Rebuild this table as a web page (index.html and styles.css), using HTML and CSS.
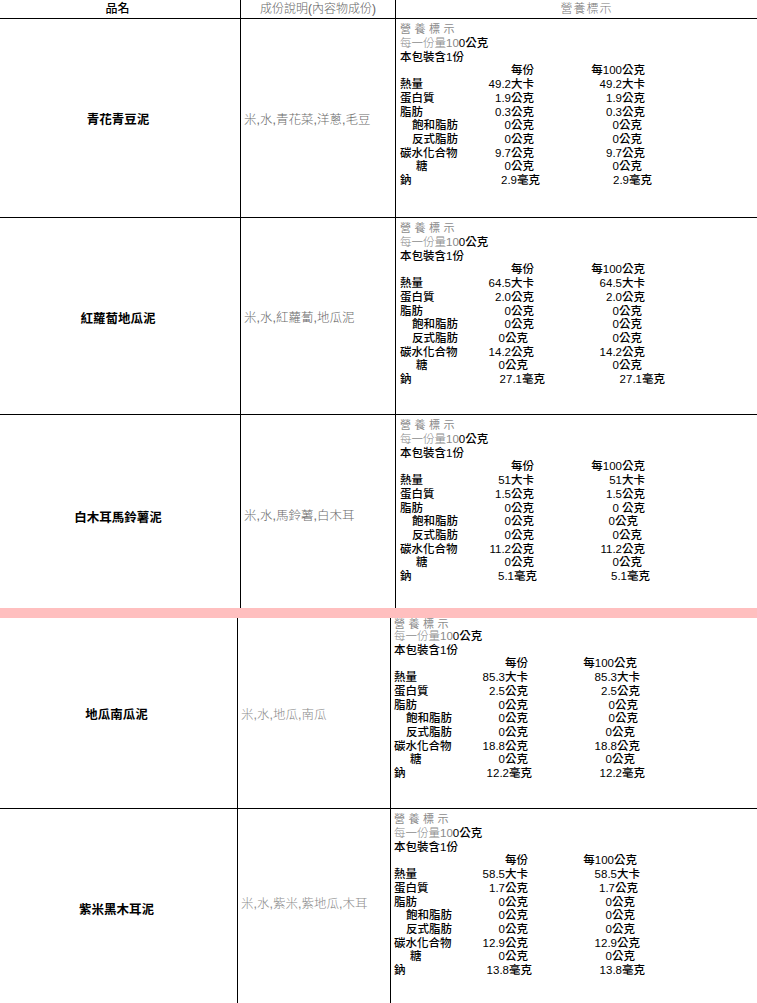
FILE: index.html
```html
<!DOCTYPE html>
<html lang="zh-Hant">
<head>
<meta charset="utf-8">
<title>營養標示</title>
<link rel="stylesheet" href="styles.css">
</head>
<body>
<section class="sheet sheet-top">
  <div class="row head">
    <div class="cell c-name">品名</div>
    <div class="cell c-ing">成份說明(內容物成份)</div>
    <div class="cell c-nut">營養標示</div>
  </div>

  <div class="row r1">
    <div class="cell c-name">青花青豆泥</div>
    <div class="cell c-ing">米,水,青花菜,洋蔥,毛豆</div>
    <div class="cell c-nut">
      <div class="nut">
        <div class="n-title">營養標示</div>
        <div class="n-line"><span class="g">每一份量10</span>0公克</div>
        <div class="n-line">本包裝含1份</div>
        <span></span><span class="v">每份</span><span class="v">每100公克</span>
        <span>熱量</span><span class="v">49.2大卡</span><span class="v">49.2大卡</span>
        <span>蛋白質</span><span class="v">1.9公克</span><span class="v">1.9公克</span>
        <span>脂肪</span><span class="v">0.3公克</span><span class="v">0.3公克</span>
        <span class="ind">飽和脂肪</span><span class="v">0公克</span><span class="v sh-3">0公克</span>
        <span class="ind">反式脂肪</span><span class="v">0公克</span><span class="v sh-3">0公克</span>
        <span>碳水化合物</span><span class="v">9.7公克</span><span class="v">9.7公克</span>
        <span class="ind2">糖</span><span class="v">0公克</span><span class="v sh-3">0公克</span>
        <span>鈉</span><span class="v sh6">2.9毫克</span><span class="v sh7">2.9毫克</span>
      </div>
    </div>
  </div>

  <div class="row r2">
    <div class="cell c-name">紅蘿蔔地瓜泥</div>
    <div class="cell c-ing">米,水,紅蘿蔔,地瓜泥</div>
    <div class="cell c-nut">
      <div class="nut">
        <div class="n-title">營養標示</div>
        <div class="n-line"><span class="g">每一份量10</span>0公克</div>
        <div class="n-line">本包裝含1份</div>
        <span></span><span class="v">每份</span><span class="v">每100公克</span>
        <span>熱量</span><span class="v">64.5大卡</span><span class="v">64.5大卡</span>
        <span>蛋白質</span><span class="v">2.0公克</span><span class="v">2.0公克</span>
        <span>脂肪</span><span class="v">0公克</span><span class="v sh-3">0公克</span>
        <span class="ind">飽和脂肪</span><span class="v">0公克</span><span class="v sh-3">0公克</span>
        <span class="ind">反式脂肪</span><span class="v sh-6">0公克</span><span class="v sh-3">0公克</span>
        <span>碳水化合物</span><span class="v">14.2公克</span><span class="v">14.2公克</span>
        <span class="ind2">糖</span><span class="v sh-6">0公克</span><span class="v sh-3">0公克</span>
        <span>鈉</span><span class="v sh11">27.1毫克</span><span class="v sh20">27.1毫克</span>
      </div>
    </div>
  </div>

  <div class="row r3">
    <div class="cell c-name">白木耳馬鈴薯泥</div>
    <div class="cell c-ing">米,水,馬鈴薯,白木耳</div>
    <div class="cell c-nut">
      <div class="nut">
        <div class="n-title">營養標示</div>
        <div class="n-line"><span class="g">每一份量10</span>0公克</div>
        <div class="n-line">本包裝含1份</div>
        <span></span><span class="v">每份</span><span class="v">每100公克</span>
        <span>熱量</span><span class="v">51大卡</span><span class="v">51大卡</span>
        <span>蛋白質</span><span class="v">1.5公克</span><span class="v">1.5公克</span>
        <span>脂肪</span><span class="v">0公克</span><span class="v">0 公克</span>
        <span class="ind">飽和脂肪</span><span class="v">0公克</span><span class="v sh-7">0公克</span>
        <span class="ind">反式脂肪</span><span class="v">0公克</span><span class="v sh-3">0公克</span>
        <span>碳水化合物</span><span class="v">11.2公克</span><span class="v">11.2公克</span>
        <span class="ind2">糖</span><span class="v">0公克</span><span class="v sh-3">0公克</span>
        <span>鈉</span><span class="v sh3">5.1毫克</span><span class="v sh5">5.1毫克</span>
      </div>
    </div>
  </div>
</section>

<div class="band"></div>

<section class="sheet sheet-bottom">
  <div class="row r4">
    <div class="cell c-name">地瓜南瓜泥</div>
    <div class="cell c-ing">米,水,地瓜,南瓜</div>
    <div class="cell c-nut">
      <div class="nut cut">
        <div class="n-title">營養標示</div>
        <div class="n-line"><span class="g">每一份量10</span>0公克</div>
        <div class="n-line">本包裝含1份</div>
        <span></span><span class="v">每份</span><span class="v sh-3">每100公克</span>
        <span>熱量</span><span class="v">85.3大卡</span><span class="v">85.3大卡</span>
        <span>蛋白質</span><span class="v">2.5公克</span><span class="v">2.5公克</span>
        <span>脂肪</span><span class="v">0公克</span><span class="v sh-2">0公克</span>
        <span class="ind">飽和脂肪</span><span class="v">0公克</span><span class="v sh-2">0公克</span>
        <span class="ind">反式脂肪</span><span class="v">0公克</span><span class="v sh-5">0公克</span>
        <span>碳水化合物</span><span class="v">18.8公克</span><span class="v">18.8公克</span>
        <span class="ind2">糖</span><span class="v">0公克</span><span class="v sh-5">0公克</span>
        <span>鈉</span><span class="v sh4">12.2毫克</span><span class="v sh5">12.2毫克</span>
      </div>
    </div>
  </div>

  <div class="row r5">
    <div class="cell c-name">紫米黑木耳泥</div>
    <div class="cell c-ing">米,水,紫米,紫地瓜,木耳</div>
    <div class="cell c-nut">
      <div class="nut">
        <div class="n-title">營養標示</div>
        <div class="n-line"><span class="g">每一份量10</span>0公克</div>
        <div class="n-line">本包裝含1份</div>
        <span></span><span class="v">每份</span><span class="v sh-3">每100公克</span>
        <span>熱量</span><span class="v">58.5大卡</span><span class="v">58.5大卡</span>
        <span>蛋白質</span><span class="v">1.7公克</span><span class="v sh-2">1.7公克</span>
        <span>脂肪</span><span class="v">0公克</span><span class="v sh-5">0公克</span>
        <span class="ind">飽和脂肪</span><span class="v">0公克</span><span class="v sh-5">0公克</span>
        <span class="ind">反式脂肪</span><span class="v">0公克</span><span class="v sh-5">0公克</span>
        <span>碳水化合物</span><span class="v">12.9公克</span><span class="v">12.9公克</span>
        <span class="ind2">糖</span><span class="v">0公克</span><span class="v sh-5">0公克</span>
        <span>鈉</span><span class="v sh4">13.8毫克</span><span class="v sh5">13.8毫克</span>
      </div>
    </div>
  </div>
</section>
</body>
</html>
```

FILE: styles.css
```css
* { box-sizing: border-box; }

html, body {
  margin: 0;
  padding: 0;
  background: #fff;
}

body {
  width: 757px;
  height: 1003px;
  overflow: hidden;
  font-family: "Liberation Sans", "Noto Sans CJK TC", sans-serif;
  color: #000;
}

.sheet { overflow: hidden; }
.sheet-top { height: 608px; }
.sheet-bottom { height: 385px; }

.band {
  height: 10px;
  background: #ffbfbf;
}

.row {
  display: grid;
  grid-template-columns: 241px 155px 1fr;
  border-bottom: 1px solid #000;
}

.sheet-bottom .row {
  grid-template-columns: 238px 153px 1fr;
}

.c-name,
.c-ing {
  border-right: 1px solid #000;
}

/* header row */
.head { height: 19px; }

.head .cell {
  display: flex;
  align-items: center;
  justify-content: center;
  font-size: 12px;
  line-height: 18px;
}

.head .c-name { padding-right: 5px; font-weight: 500; }
.head .c-ing { color: #666; font-weight: 300; }
.head .c-nut { color: #777; font-weight: 300; letter-spacing: 1px; padding-left: 20px; }

/* row heights */
.r1 { height: 199px; }
.r2 { height: 197px; }
.r3 { height: 200px; }
.r4 { height: 191px; }
.r5 { height: 200px; }

/* product name */
.row:not(.head) .c-name {
  display: flex;
  align-items: center;
  justify-content: center;
  font-size: 12.5px;
  font-weight: 700;
  padding-right: 4px;
}

.r2 .c-name, .r3 .c-name { padding-top: 3px; }

/* ingredients */
.row:not(.head) .c-ing {
  display: flex;
  align-items: center;
  padding-left: 3px;
  font-size: 12.5px;
  font-weight: 300;
  color: #6a6a6a;
}

.sheet-bottom .row .c-ing { color: #8a8a8a; padding-left: 3px; }
.r5 .c-ing { padding-bottom: 12px; }

/* nutrition cell */
.row:not(.head) .c-nut {
  padding: 2px 0 0 4px;
}

.r2 .c-nut { padding-top: 0; }
.r3 .c-nut { padding-top: 0; }
.sheet-bottom .row .c-nut { padding-left: 3px; }
.sheet-bottom .r4 .c-nut { padding-top: 0; }

.nut {
  display: grid;
  grid-template-columns: 82px 52px 111px;
  font-size: 11.5px;
  line-height: 13.7px;
  font-weight: 500;
  white-space: nowrap;
}

.sheet-bottom .nut {
  grid-template-columns: 81px 53px 112px;
}

.n-title {
  grid-column: 1 / -1;
  line-height: 16px;
  font-size: 11px;
  letter-spacing: 3.5px;
  color: #8c8c8c;
  font-weight: 400;
}

.nut.cut .n-title { line-height: 12px; }

.n-line { grid-column: 1 / -1; }

.g {
  color: #8a8a8a;
  font-weight: 300;
}

.v { justify-self: end; }

.ind { padding-left: 12px; }
.ind2 { padding-left: 16px; }

/* small per-value alignment nudges, as in the printed label */
.sh-2 { margin-right: 2px; }
.sh-3 { margin-right: 3px; }
.sh-5 { margin-right: 5px; }
.sh-6 { margin-right: 6px; }
.sh-7 { margin-right: 7px; }
.sh3 { margin-right: -3px; }
.sh4 { margin-right: -4px; }
.sh5 { margin-right: -5px; }
.sh6 { margin-right: -6px; }
.sh7 { margin-right: -7px; }
.sh11 { margin-right: -11px; }
.sh20 { margin-right: -20px; }
```
